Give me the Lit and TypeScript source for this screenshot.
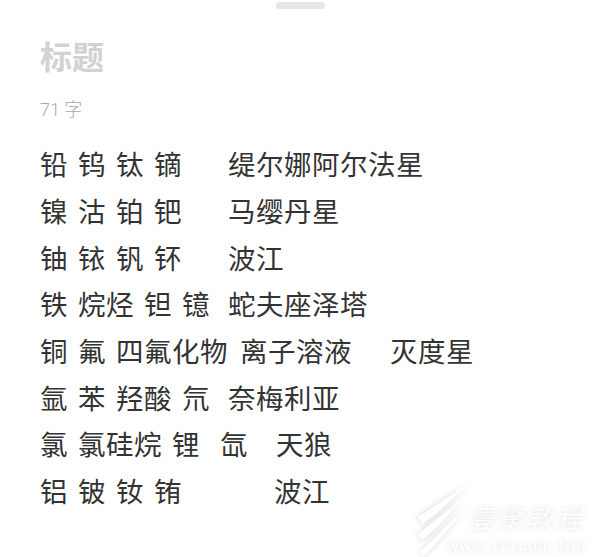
import { LitElement, html, css } from "lit";
import { customElement } from "lit/decorators.js";

type Tok = [string, number];
const rows: Tok[][] = [
  [["铅", 0], ["钨", 10], ["钛", 10], ["镝", 10], ["缇尔娜阿尔法星", 46]],
  [["镍", 0], ["沽", 10], ["铂", 10], ["钯", 10], ["马缨丹星", 46]],
  [["铀", 0], ["铱", 10], ["钒", 10], ["钚", 10], ["波江", 46]],
  [["铁", 0], ["烷烃", 10], ["钽", 10], ["镱", 10], ["蛇夫座泽塔", 18]],
  [["铜", 0], ["氟", 10], ["四氟化物", 10], ["离子溶液", 12], ["灭度星", 38]],
  [["氩", 0], ["苯", 10], ["羟酸", 10], ["氘", 10], ["奈梅利亚", 18]],
  [["氯", 0], ["氯硅烷", 10], ["锂", 10], ["氙", 20], ["天狼", 28]],
  [["铝", 0], ["铍", 10], ["钕", 10], ["铕", 10], ["波江", 92]],
];

@customElement("app-root")
export class AppRoot extends LitElement {
  static styles = css`
    :host {
      display: block;
      width: 600px;
      height: 557px;
      position: relative;
      overflow: hidden;
      background: #fff;
      font-family: "Noto Sans CJK SC", "Noto Sans", sans-serif;
    }
    .sheet {
      display: flex;
      flex-direction: column;
      padding: 2px 0 0 40px;
    }
    .handle {
      align-self: center;
      width: 49px;
      height: 7px;
      margin-left: -40px;
      border-radius: 4px;
      background: #e6e6e6;
    }
    h1 {
      margin: 22px 0 0;
      font-size: 32px;
      line-height: 48px;
      font-weight: 700;
      color: #d2d2d2;
    }
    .count {
      margin-top: 19px;
      font-family: "Roboto", "Noto Sans CJK SC", sans-serif;
      font-size: 18px;
      line-height: 24px;
      font-weight: 300;
      color: #a8a8a8;
    }
    .rows {
      margin-top: 18px;
      display: flex;
      flex-direction: column;
    }
    .row {
      display: flex;
      height: 46.7px;
      align-items: center;
      font-size: 27.5px;
      line-height: 46px;
      letter-spacing: 0.5px;
      color: #333;
      font-weight: 400;
      white-space: pre;
    }
    .mark {
      position: absolute;
      left: 416px;
      top: 484px;
      width: 184px;
      height: 73px;
      filter: drop-shadow(0 0 3px rgba(0, 0, 0, 0.16));
      color: #fff;
    }
    .mark svg {
      position: absolute;
      left: 0;
      top: 0;
    }
    .brand {
      position: absolute;
      left: 53px;
      top: 20px;
      font-size: 26px;
      line-height: 26px;
      letter-spacing: 3px;
      font-style: italic;
      font-weight: 300;
      white-space: pre;
    }
    .url {
      position: absolute;
      left: 31px;
      top: 53px;
      font-family: "Liberation Sans", sans-serif;
      font-size: 15px;
      line-height: 18px;
      letter-spacing: 1.9px;
      white-space: pre;
    }
  `;

  render() {
    return html`
      <div class="sheet">
        <div class="handle"></div>
        <h1>标题</h1>
        <div class="count">71 字</div>
        <div class="rows">
          ${rows.map(
            (r) => html`<div class="row">
              ${r.map(
                ([t, gap]) => html`<span style="margin-left:${gap}px">${t}</span>`
              )}
            </div>`
          )}
        </div>
      </div>
      <div class="mark">
        <svg width="60" height="73" viewBox="0 0 60 73" fill="#fff">
          <path d="M2 33 L52 0 L20 30 L6 40 Z" />
          <path d="M2 50 L50 12 L18 46 L6 56 Z" />
          <path d="M4 68 L50 24 L18 62 L8 72 Z" />
        </svg>
        <span class="brand">壹聚教程</span>
        <span class="url">www.111com.Net</span>
      </div>
    `;
  }
}
